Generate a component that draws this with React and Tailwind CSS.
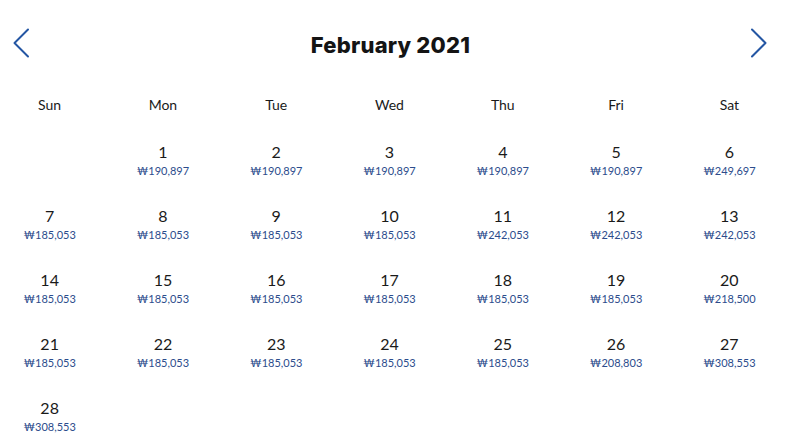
const days = ['Sun', 'Mon', 'Tue', 'Wed', 'Thu', 'Fri', 'Sat']

const prices = {
  1: '190,897', 2: '190,897', 3: '190,897', 4: '190,897', 5: '190,897', 6: '249,697',
  7: '185,053', 8: '185,053', 9: '185,053', 10: '185,053', 11: '242,053', 12: '242,053', 13: '242,053',
  14: '185,053', 15: '185,053', 16: '185,053', 17: '185,053', 18: '185,053', 19: '185,053', 20: '218,500',
  21: '185,053', 22: '185,053', 23: '185,053', 24: '185,053', 25: '185,053', 26: '208,803', 27: '308,553',
  28: '308,553',
}

function Arrow({ dir }) {
  return (
    <svg width="18" height="30" viewBox="0 0 18 30" fill="none">
      <polyline
        points={dir === 'left' ? '15,1.5 1.5,15 15,28.5' : '3,1.5 16.5,15 3,28.5'}
        stroke="#2456a3"
        strokeWidth="2"
        strokeLinecap="round"
        strokeLinejoin="round"
      />
    </svg>
  )
}

export default function App() {
  // Feb 2021 starts on Monday
  const cells = [null, ...Array.from({ length: 28 }, (_, i) => i + 1)]
  while (cells.length % 7) cells.push(null)

  return (
    <div className="w-[786px] h-[439px] overflow-hidden bg-white" style={{ fontFamily: 'Lato, "Noto Sans", sans-serif' }}>
      <div className="flex items-center h-[92px] pl-[12px] pr-[19px]">
        <button className="flex w-[18px] h-[30px] mt-[-6px] ml-[1px]"><Arrow dir="left" /></button>
        <h1 className="flex-1 text-center text-[22px] font-extrabold text-[#141414] tracking-[0.2px] mt-[-1px] pl-[1px]" style={{ fontFamily: 'Inter, sans-serif' }}>
          February 2021
        </h1>
        <button className="flex w-[18px] h-[30px] mt-[-6px]"><Arrow dir="right" /></button>
      </div>

      <div className="w-[793px] ml-[-7px]">
        <div className="grid grid-cols-7 h-[24px] items-center">
          {days.map(d => (
            <div key={d} className="text-center text-[14px] text-[#1a1a1a]">{d}</div>
          ))}
        </div>
        <div className="grid grid-cols-7">
          {cells.map((n, i) => (
            <div key={i} className="h-[64px] pt-[26px] flex flex-col items-center">
              {n && (
                <>
                  <span className="text-[16px] leading-[20px] text-[#1a1a1a]">{n}</span>
                  <span className="mt-[2px] text-[11px] leading-[14px] text-[#2c4c8c]">₩{prices[n]}</span>
                </>
              )}
            </div>
          ))}
        </div>
      </div>
    </div>
  )
}
